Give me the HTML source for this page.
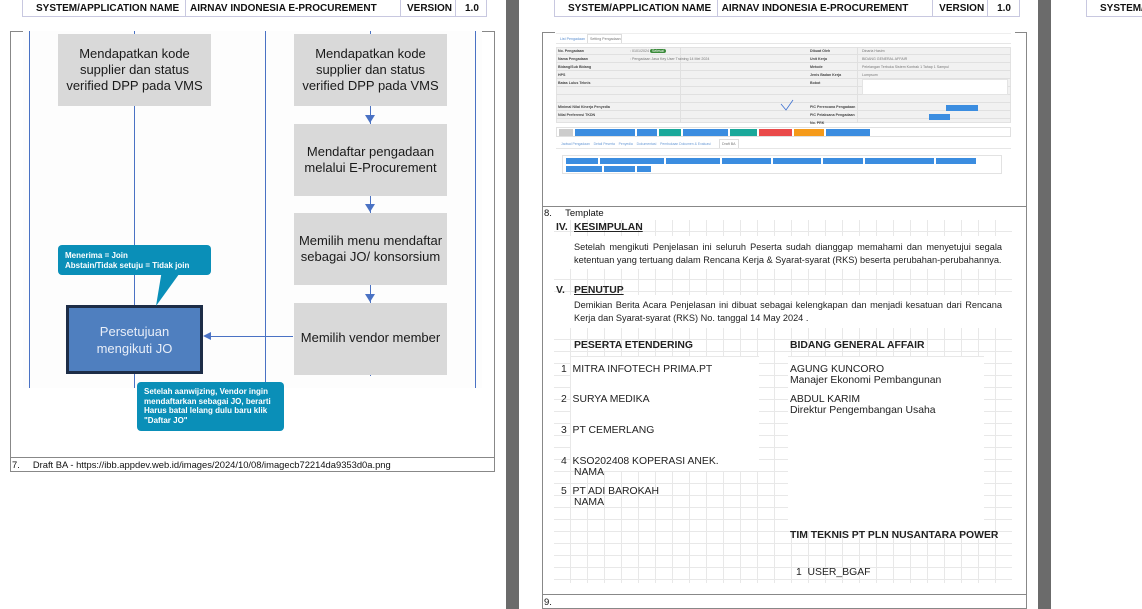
<!DOCTYPE html>
<html><head><meta charset="utf-8"><style>
*{margin:0;padding:0;box-sizing:border-box}
body{width:1142px;height:609px;position:relative;overflow:hidden;background:#fff;font-family:"Liberation Sans",Arial,sans-serif}
.a{position:absolute}
.gray{background:#6b6b6b}
.hdr{position:absolute;border:1px solid #c8c8e0;border-top:none;height:17px;font-size:10px;font-weight:bold;color:#111;display:flex;align-items:center;white-space:nowrap;overflow:hidden}
.hdr div{height:100%;display:flex;align-items:center;border-right:1px solid #c8c8e0;padding-left:4px}
.hdr div:last-child{border-right:none}
.box{position:absolute;background:#d9d9d9;color:#1a1a1a;font-family:"Liberation Sans",sans-serif;font-size:13px;line-height:16px;display:flex;align-items:center;justify-content:center;text-align:center;white-space:nowrap}
.vl{position:absolute;width:1px;background:#4a72c4}
.arr{position:absolute;width:0;height:0;border-left:5px solid transparent;border-right:5px solid transparent;border-top:8px solid #4a72c4}
.call{position:absolute;background:#0a8fb8;color:#fff;font-family:"Liberation Sans",sans-serif;font-weight:bold;font-size:8px;line-height:9.6px;border-radius:4px;padding:6px 7px}
.t{position:absolute;font-size:10.4px;color:#222;white-space:nowrap}
.b{font-weight:bold}
.tiny{position:absolute;font-size:3.6px;line-height:5px;color:#777;white-space:nowrap}
.btn{display:inline-block;height:7px;margin-right:2px;background:#3b8de0;vertical-align:top}
.p{position:absolute;left:574px;width:428px;line-height:13px;font-family:"Liberation Sans",Arial,sans-serif;font-size:9.2px;color:#222}
.p div{white-space:nowrap}
.p .j{text-align:justify;text-align-last:justify}
</style></head><body>
<div class="a gray" style="left:506px;top:0;width:13px;height:609px"></div>
<div class="a gray" style="left:1038px;top:0;width:13px;height:609px"></div>

<!-- PAGE 1 -->
<div class="hdr" style="left:22px;top:0;width:465px"><div style="width:163px;padding-left:13px">SYSTEM/APPLICATION NAME</div><div style="width:215px">AIRNAV INDONESIA E-PROCUREMENT</div><div style="width:55px;padding-left:6px">VERSION</div><div style="width:30px;padding-left:9px">1.0</div></div>
<div class="a" style="left:10px;top:31px;width:485px;height:441px;border:1px solid #888;border-top:none"></div>
<div class="a" style="left:10px;top:31px;width:13px;height:1px;background:#888"></div>
<div class="a" style="left:482px;top:31px;width:13px;height:1px;background:#888"></div>
<div class="a" style="left:23px;top:31px;width:459px;height:357px;background:#fdfdfd"></div>
<div class="vl" style="left:29px;top:31px;height:357px"></div>
<div class="vl" style="left:265px;top:31px;height:357px"></div>
<div class="vl" style="left:475px;top:31px;height:357px"></div>
<div class="vl" style="left:134px;top:31px;height:357px"></div>
<div class="vl" style="left:370px;top:31px;height:345px"></div>
<div class="box" style="left:58px;top:34px;width:153px;height:72px">Mendapatkan kode<br>supplier dan status<br>verified DPP pada VMS</div>
<div class="box" style="left:294px;top:34px;width:153px;height:72px">Mendapatkan kode<br>supplier dan status<br>verified DPP pada VMS</div>
<div class="arr" style="left:365px;top:115px"></div>
<div class="box" style="left:294px;top:124px;width:153px;height:72px">Mendaftar pengadaan<br>melalui E-Procurement</div>
<div class="arr" style="left:365px;top:204px"></div>
<div class="box" style="left:294px;top:213px;width:153px;height:72px">Memilih menu mendaftar<br>sebagai JO/ konsorsium</div>
<div class="arr" style="left:365px;top:294px"></div>
<div class="box" style="left:294px;top:303px;width:153px;height:72px;padding-bottom:2px">Memilih vendor member</div>
<div class="a" style="left:210px;top:336px;width:83px;height:1px;background:#4a72c4"></div>
<div class="a" style="left:203px;top:332px;width:0;height:0;border-top:4px solid transparent;border-bottom:4px solid transparent;border-right:8px solid #4a72c4"></div>
<div class="a" style="left:66px;top:305px;width:137px;height:69px;background:#4f7fbf;border:3px solid #1d2d47;color:#e8eef8;font-size:13px;line-height:17px;display:flex;align-items:center;justify-content:center;text-align:center">Persetujuan<br>mengikuti JO</div>
<svg class="a" style="left:150px;top:270px" width="40" height="38"><polygon points="12,0 32,0 6,36" fill="#0a8fb8"/></svg>
<div class="call" style="left:58px;top:245px;width:153px;height:30px">Menerima = Join<br>Abstain/Tidak setuju = Tidak join</div>
<div class="call" style="left:137px;top:382px;width:147px;height:49px;padding-top:5px">Setelah aanwijzing, Vendor ingin<br>mendaftarkan sebagai JO, berarti<br>Harus batal lelang dulu baru klik<br>"Daftar JO"</div>
<div class="a" style="left:10px;top:457px;width:485px;height:1px;background:#888"></div>
<div class="t" style="left:12px;top:459px;font-size:9.4px;color:#111">7.&nbsp;&nbsp;&nbsp;&nbsp;&nbsp;Draft BA - https://ibb.appdev.web.id/images/2024/10/08/imagecb72214da9353d0a.png</div>

<!-- PAGE 2 -->
<div class="hdr" style="left:554px;top:0;width:466px"><div style="width:163px;padding-left:13px">SYSTEM/APPLICATION NAME</div><div style="width:216px">AIRNAV INDONESIA E-PROCUREMENT</div><div style="width:55px;padding-left:6px">VERSION</div><div style="width:31px;padding-left:9px">1.0</div></div>
<div class="a" style="left:542px;top:32px;width:485px;height:577px;border:1px solid #888;border-top:none"></div>
<div class="a" style="left:542px;top:32px;width:13px;height:1px;background:#888"></div>
<div class="a" style="left:1015px;top:32px;width:12px;height:1px;background:#888"></div>
<div class="a" style="left:556px;top:33px;width:455px;height:1px;background:#eee"></div>
<div class="tiny" style="left:560px;top:37px;color:#5b8fd0">List Pengadaan</div>
<div class="a" style="left:587px;top:34px;width:35px;height:9px;border:1px solid #ddd;border-bottom:none"></div>
<div class="tiny" style="left:590px;top:37px">Setting Pengadaan</div>
<div class="a" style="left:556px;top:43px;width:455px;height:1px;background:#e6e6e6"></div>
<div class="a" style="left:556px;top:47px;width:455px;height:76px;background:#f1f1f1;border:1px solid #e2e2e2"></div>
<div class="a" style="left:556px;top:47px;width:455px;height:76px;background:repeating-linear-gradient(#0000 0 7px,#e0e0e0 7px 8px)"></div>
<div class="a" style="left:680px;top:47px;width:1px;height:76px;background:#e0e0e0"></div>
<div class="a" style="left:857px;top:47px;width:1px;height:76px;background:#e0e0e0"></div>
<div class="a" style="left:862px;top:79px;width:146px;height:16px;background:#fff;border:1px solid #e4e4e4"></div>
<div class="tiny b" style="left:558px;top:49px;line-height:4px;color:#444">No. Pengadaan<br><br>Nama Pengadaan<br><br>Bidang/Sub Bidang<br><br>HPS<br><br>Batas Lulus Teknis<br><br><br><br><br><br>Minimal Nilai Kinerja Penyedia<br><br>Nilai Preferensi TKDN</div>
<div class="tiny" style="left:630px;top:49px;line-height:4px">: 0101/2024 <span style="background:#3a8a3a;color:#fff;border-radius:3px;padding:0 2px">Selesai</span><br><br>: Pengadaan Jasa Key User Training 14 Mei 2024</div>
<div class="tiny b" style="left:810px;top:49px;line-height:4px;color:#444">Dibuat Oleh<br><br>Unit Kerja<br><br>Metode<br><br>Jenis Badan Kerja<br><br>Bobot<br><br><br><br><br><br>PIC Perencana Pengadaan<br><br>PIC Pelaksana Pengadaan<br><br>No. PRK</div>
<div class="tiny" style="left:862px;top:49px;line-height:4px">Dinaria Hasim<br><br>BIDANG GENERAL AFFAIR<br><br>Pelelangan Terbuka Sistem Kontrak 1 Tahap 1 Sampul<br><br>Lumpsum</div>
<div class="a" style="left:946px;top:105px;width:32px;height:6px;background:#3b8de0"></div>
<div class="a" style="left:929px;top:114px;width:21px;height:6px;background:#3b8de0"></div>
<svg class="a" style="left:780px;top:99px" width="14" height="12"><path d="M1 5 L6 11 L13 1" fill="none" stroke="#3b6fd0" stroke-width="0.8"/></svg>
<div class="a" style="left:556px;top:127px;width:455px;height:10px;border:1px solid #e0e0e0;padding:1px 2px;font-size:0;white-space:nowrap"><span class="btn" style="width:14px;background:#ccc"></span><span class="btn" style="width:60px"></span><span class="btn" style="width:20px"></span><span class="btn" style="width:22px;background:#1aa89a"></span><span class="btn" style="width:45px"></span><span class="btn" style="width:27px;background:#1aa89a"></span><span class="btn" style="width:33px;background:#ea4a4a"></span><span class="btn" style="width:30px;background:#f59a1a"></span><span class="btn" style="width:44px"></span></div>
<div class="tiny" style="left:561px;top:142px;color:#6b9bd6;font-size:3.4px">Jadwal Pengadaan &nbsp;&nbsp; Detail Peserta &nbsp;&nbsp; Penyedia &nbsp;&nbsp; Dokumentasi &nbsp;&nbsp; Pembukaan Dokumen &amp; Evaluasi</div>
<div class="a" style="left:719px;top:139px;width:20px;height:9px;border:1px solid #ddd;border-bottom:none"></div>
<div class="tiny" style="left:722px;top:142px">Draft BA</div>
<div class="a" style="left:556px;top:148px;width:455px;height:1px;background:#e6e6e6"></div>
<div class="a" style="left:562px;top:155px;width:440px;height:19px;border:1px solid #e2e2e2;padding:2px 3px;font-size:0;line-height:0">
<span class="btn" style="width:32px;height:6px"></span><span class="btn" style="width:64px;height:6px"></span><span class="btn" style="width:54px;height:6px"></span><span class="btn" style="width:49px;height:6px"></span><span class="btn" style="width:48px;height:6px"></span><span class="btn" style="width:40px;height:6px"></span><span class="btn" style="width:69px;height:6px"></span><span class="btn" style="width:40px;height:6px"></span><div style="height:2px"></div><span class="btn" style="width:36px;height:6px"></span><span class="btn" style="width:31px;height:6px"></span><span class="btn" style="width:14px;height:6px"></span></div>
<div class="a" style="left:542px;top:206px;width:485px;height:1px;background:#888"></div>
<div class="t" style="left:544px;top:208px;font-size:9.5px;color:#111">8.&nbsp;&nbsp;&nbsp;&nbsp;&nbsp;Template</div>
<div class="a" style="left:554px;top:220px;width:458px;height:363px;background:repeating-linear-gradient(90deg,#0000 0 16px,#e8e8e8 16px 17px)"></div>
<div class="a" style="left:554px;top:236px;width:458px;height:33px;background:#fff"></div>
<div class="a" style="left:554px;top:295px;width:458px;height:33px;background:#fff"></div>
<div class="a" style="left:554px;top:220px;width:458px;height:363px;background:repeating-linear-gradient(#0000 0 11px,#e8e8e8 11px 12px)"></div>
<div class="a" style="left:554px;top:236px;width:458px;height:33px;background:#fff"></div>
<div class="a" style="left:554px;top:295px;width:458px;height:33px;background:#fff"></div>
<div class="a" style="left:571px;top:356px;width:188px;height:115px;background:#fff;border-top:1px solid #e8e8e8"></div>
<div class="a" style="left:788px;top:356px;width:196px;height:175px;background:#fff;border-top:1px solid #e8e8e8"></div>
<div class="t b" style="left:556px;top:222px">IV.</div>
<div class="t b" style="left:574px;top:222px;text-decoration:underline">KESIMPULAN</div>
<div class="p" style="top:241px"><div class="j">Setelah mengikuti Penjelasan ini seluruh Peserta sudah dianggap memahami dan menyetujui segala</div><div>ketentuan yang tertuang dalam Rencana Kerja &amp; Syarat-syarat (RKS) beserta perubahan-perubahannya.</div></div>
<div class="t b" style="left:556px;top:285px">V.</div>
<div class="t b" style="left:574px;top:285px;text-decoration:underline">PENUTUP</div>
<div class="p" style="top:299px"><div class="j">Demikian Berita Acara Penjelasan ini dibuat sebagai kelengkapan dan menjadi kesatuan dari Rencana</div><div>Kerja dan Syarat-syarat (RKS) No. tanggal 14 May 2024 .</div></div>
<div class="t b" style="left:574px;top:340px">PESERTA ETENDERING</div>
<div class="t b" style="left:790px;top:340px">BIDANG GENERAL AFFAIR</div>
<div class="t" style="left:561px;top:364px">1&nbsp;&nbsp;MITRA INFOTECH PRIMA.PT</div>
<div class="t" style="left:790px;top:364px;line-height:11px">AGUNG KUNCORO<br>Manajer Ekonomi Pembangunan</div>
<div class="t" style="left:561px;top:394px">2&nbsp;&nbsp;SURYA MEDIKA</div>
<div class="t" style="left:790px;top:394px;line-height:11px">ABDUL KARIM<br>Direktur Pengembangan Usaha</div>
<div class="t" style="left:561px;top:425px">3&nbsp;&nbsp;PT CEMERLANG</div>
<div class="t" style="left:561px;top:456px;line-height:11px">4&nbsp;&nbsp;KSO202408 KOPERASI ANEK.<br><span style="padding-left:13px">NAMA</span></div>
<div class="t" style="left:561px;top:486px;line-height:11px">5&nbsp;&nbsp;PT ADI BAROKAH<br><span style="padding-left:13px">NAMA</span></div>
<div class="t b" style="left:790px;top:530px">TIM TEKNIS PT PLN NUSANTARA POWER</div>
<div class="t" style="left:796px;top:567px">1&nbsp;&nbsp;USER_BGAF</div>
<div class="a" style="left:542px;top:594px;width:485px;height:1px;background:#888"></div>
<div class="t" style="left:544px;top:597px;font-size:9.5px;color:#111">9.</div>

<!-- PAGE 3 -->
<div class="hdr" style="left:1086px;top:0;width:56px;border-right:none"><div style="width:56px;padding-left:13px;border-right:none">SYSTEM/APPLICATION NAME</div></div>
</body></html>
